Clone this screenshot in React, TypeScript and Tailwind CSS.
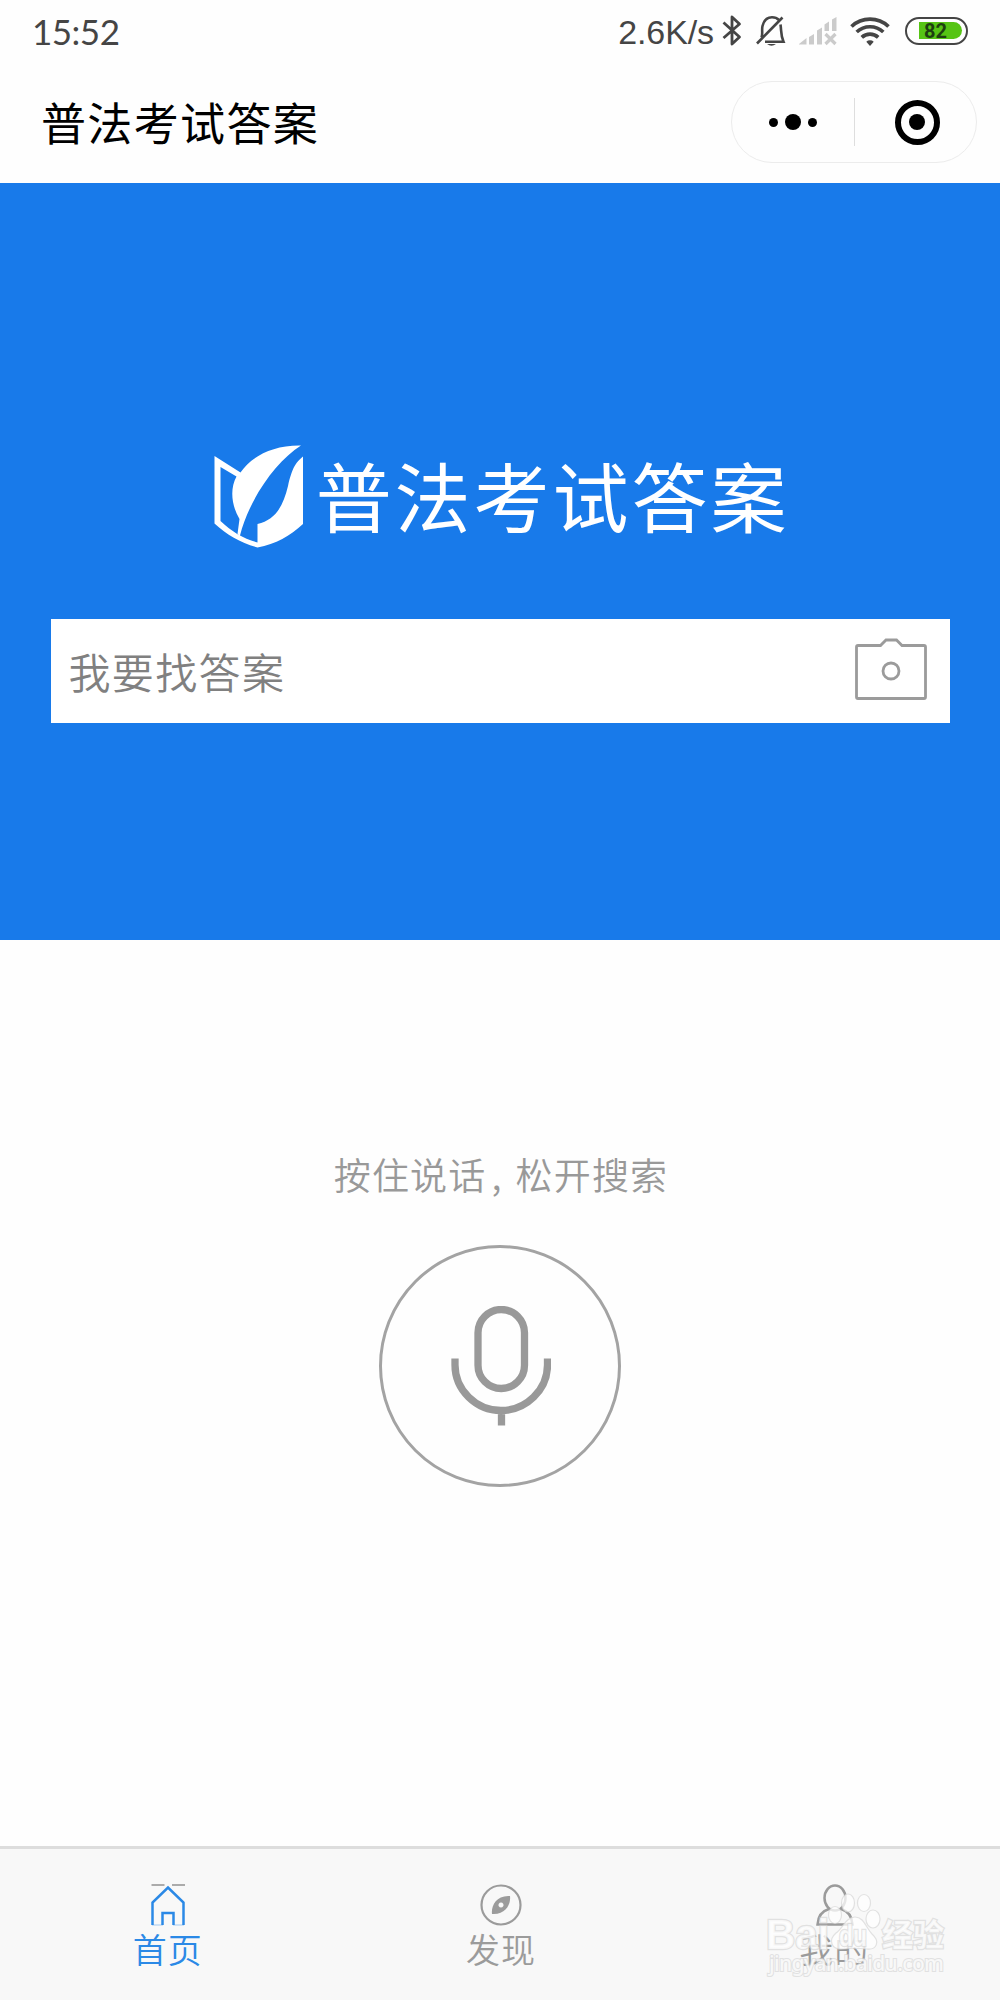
import type { ReactNode } from "react";

const StatusBar = () => (
  <div className="flex h-16 items-center justify-between pl-[32px] pr-[32px] text-[#454545]">
    <span className="mt-[-1px] font-[Lato,sans-serif] text-[35px] font-normal leading-none tracking-[-0.5px]">15:52</span>
    <div className="flex items-center">
      <span className="whitespace-nowrap font-['Liberation_Sans',sans-serif] text-[34px] font-normal leading-none tracking-[-0.1px]">2.6K/s</span>
      <svg className="ml-2 mt-[-2px] h-8 w-5" viewBox="0 0 20 32" fill="none" stroke="currentColor" strokeWidth="2.8">
        <path d="M1.5 7.5 L17.5 22 L10 29 V2 L17.5 9 L1.5 23" strokeLinejoin="round" />
      </svg>
      <svg className="ml-3.5 mt-[-3px] h-8 w-8" viewBox="0 0 32 32" fill="none" stroke="currentColor" strokeWidth="2.6">
        <path d="M1 28.5 L26.5 2.5 M5.5 22.5 C7 19 5.5 15 6.5 11 C8 5 12 2.3 16 2.3 C19 2.3 21 3 23 5 M24.5 9.5 C25.5 16 24.5 19.5 27.5 26.8 H9" />
        <path d="M11 29 h9 q-4.5 3.5 -9 0z" fill="currentColor" stroke="none" />
      </svg>
      <svg className="ml-[11px] mt-[-3px] h-8 w-[38px]" viewBox="0 0 38 32" fill="#cbcbcb">
        <path d="M0 29 L7.5 23 V29.5 H0z M10 22 L15 19 V29.5 H10z M18 15.5 L23 12.5 V29.5 H18z M25.5 9.5 L30 6.5 V16 H25.5z M33 4.5 L37.5 2 V16 H33z" />
        <path d="M26.5 19 L36.5 29 M36.5 19 L26.5 29" stroke="#cbcbcb" strokeWidth="3.2" />
      </svg>
      <svg className="ml-[13px] mt-[-2px] h-8 w-10" viewBox="0 0 40 32" fill="none" stroke="currentColor" strokeWidth="3.7">
        <path d="M1.5 11.5 A27 27 0 0 1 38.5 11.5 M6.7 17 A19.5 19.5 0 0 1 33.3 17 M11.8 22.3 A12 12 0 0 1 28.2 22.3" />
        <path d="M16.3 26.8 a5.5 5.5 0 0 1 7.4 0 L20 31z" fill="currentColor" stroke="none" />
      </svg>
      <div className="ml-[15px] mt-[-3px] flex h-[28px] w-[63px] items-center rounded-full border-2 border-[#454545] pl-3">
        <div className="flex h-[17px] w-[43px] items-center rounded-l-[2px] rounded-r-full bg-[#56c414] pl-[5px] font-[Roboto,sans-serif] text-[20px] font-bold leading-none text-[#1e3f10]">
          82
        </div>
      </div>
    </div>
  </div>
);

const NavBar = () => (
  <div className="flex h-[119px] items-start justify-between pl-[41px] pr-[23px]">
    <h1 className="mt-[23px] text-[45px] font-normal leading-[70px] tracking-[1.35px] text-black">普法考试答案</h1>
    <div className="mt-[17px] flex h-[82px] w-[246px] items-center rounded-full border border-[#ececec]">
      <div className="flex flex-1 items-center justify-center gap-[7px]">
        <i className="h-[9px] w-[9px] rounded-full bg-black" />
        <i className="h-4 w-4 rounded-full bg-black" />
        <i className="h-[9px] w-[9px] rounded-full bg-black" />
      </div>
      <div className="h-12 w-px bg-[#dedede]" />
      <div className="flex w-[121px] items-center justify-center pl-[3px]">
        <div className="flex h-[45px] w-[45px] items-center justify-center rounded-full border-[6px] border-black">
          <i className="h-4 w-4 rounded-full bg-black" />
        </div>
      </div>
    </div>
  </div>
);

const Logo = () => (
  <svg className="h-[104px] w-[90px]" viewBox="0 0 90 104" fill="white">
    <path d="M0.5 11 L26.5 27.5 C37 12 58 0 87 0.5 C61 17 35 55 26 90.5 L23.5 89 L25.5 74 C17 60 16 43 22.5 31.5 L6.5 22 V76 C18 87 30 94 43.5 97.5 V79 C61 75 69 62 74 41 C78 24 81 18 89 11.5 V79 C76 91 62 99 43.5 102.5 C27 98 13 90 0.5 78.5z" />
  </svg>
);

const Hero = () => (
  <section className="flex h-[757px] flex-col items-center bg-[#187aea]">
    <div className="mt-[262px] flex h-[104px] items-center gap-[12px] pl-[3px]">
      <Logo />
      <span className="mt-[-7px] text-[76px] font-normal leading-none tracking-[2.95px] text-white">普法考试答案</span>
    </div>
    <div className="mt-[70px] flex h-[104px] w-[899px] items-center justify-between bg-white pl-[18px] pr-[23px]">
      <span className="mt-[-1px] text-[42px] leading-none tracking-[1.35px] text-[#808080]">我要找答案</span>
      <svg className="mt-[-4px] h-[62px] w-[72px]" viewBox="0 0 72 62" fill="none" stroke="#9b9b9b" strokeWidth="2.8">
        <path d="M3 7.5 H25.5 L31 2 H41.5 L47 7.5 H69 Q70.5 7.5 70.5 9 V59 Q70.5 60.5 69 60.5 H3 Q1.5 60.5 1.5 59 V9 Q1.5 7.5 3 7.5z" />
        <circle cx="36" cy="33" r="8" />
      </svg>
    </div>
  </section>
);

const VoiceSearch = () => (
  <section className="flex flex-1 flex-col items-center text-[#999999]">
    <p className="mt-[204px] whitespace-nowrap pl-[2px] text-[37px] leading-[60px] tracking-[1.2px]">
      按住说话<span className="inline-block w-[29px] pl-[5px]">,</span>松开搜索
    </p>
    <button className="mt-[41px] flex h-[242px] w-[242px] items-center justify-center rounded-full border-3 border-[#a3a3a3]">
      <svg className="ml-[2px] h-[120px] w-[100px]" viewBox="0 0 100 120" fill="none" stroke="#999999" strokeWidth="7.3">
        <rect x="27" y="3.5" width="46.5" height="79" rx="23.25" />
        <path d="M4 52.5 V59 C4 84 25 104.5 50 104.5 C75 104.5 96.5 84 96.5 59 V52.5 M50.5 104 V119.5" />
      </svg>
    </button>
  </section>
);

const TabItem = ({ label, active, children }: { label: string; active?: boolean; children: ReactNode }) => (
  <div className={active ? "flex flex-1 flex-col items-center text-[#2b89e6]" : "flex flex-1 flex-col items-center text-[#9b9b9b]"}>
    <svg className="ml-[3px] mt-[35px] h-[42px] w-[42px]" viewBox="0 0 42 42" fill="none" stroke="currentColor" strokeWidth="2.5">
      {children}
    </svg>
    <span className="pl-[2px] text-[34px] leading-[46px] tracking-[1px]">{label}</span>
  </div>
);

const Watermark = () => (
  <svg
    className="absolute left-[764px] top-[1888px] h-[92px] w-[188px]"
    viewBox="0 0 188 92"
    fill="white"
    fillOpacity="0.75"
    stroke="#d4d4d4"
    strokeOpacity="0.65"
    strokeWidth="1.2"
  >
    <g fontFamily="Liberation Sans, sans-serif" fontWeight="bold">
      <ellipse cx="71" cy="27" rx="6.5" ry="8.5" />
      <ellipse cx="84" cy="15" rx="6.5" ry="9" />
      <ellipse cx="100" cy="15" rx="6.5" ry="8.5" />
      <ellipse cx="109" cy="31" rx="7" ry="9" />
      <path d="M72 45 C79 40 82 29 91 29 C100 29 102 40 108 46 C117 54 112 62 103 61 C94 60 86 60 79 61 C67 62 64 52 72 45z" />
      <g strokeWidth="2.5" paintOrder="stroke">
        <text x="2" y="61" fontSize="42" textLength="63" lengthAdjust="spacingAndGlyphs">Bai</text>
        <text x="75" y="58" fontSize="29" textLength="28" lengthAdjust="spacingAndGlyphs">du</text>
        <text x="118" y="58" fontSize="31" fontFamily="Noto Sans CJK SC, sans-serif" textLength="62">经验</text>
      </g>
    </g>
    <text
      x="5"
      y="83"
      fontSize="21"
      fontFamily="Noto Sans, sans-serif"
      fontWeight="500"
      textLength="175"
      strokeWidth="2"
      paintOrder="stroke"
    >
      jingyan.baidu.com
    </text>
  </svg>
);

const TabBar = () => (
  <nav className="flex h-[154px] border-t-[3px] border-[#dddddd] bg-[#f8f8f8]">
    <TabItem label="首页" active>
      <path d="M4.5 1 H17.5 M25 1 H38" stroke="#ababab" strokeWidth="1.8" />
      <path d="M5.5 41 V18.5 L21 3.5 L36.5 18.5 V41 M15.5 41 V29 H26.5 V41" />
      <path d="M5 41 H16 M26 41 H37" strokeOpacity="0.4" strokeWidth="1" />
    </TabItem>
    <TabItem label="发现">
      <circle cx="21" cy="21" r="19.5" strokeWidth="2.2" />
      <path
        d="M30 12 C31 20 26 31 12 30 C11 22 16 11 30 12z M21 18.5 a2.5 2.5 0 1 0 0.01 0z"
        fill="currentColor"
        fillRule="evenodd"
        stroke="none"
      />
    </TabItem>
    <TabItem label="我的">
      <ellipse cx="21" cy="14" rx="10.5" ry="12.5" />
      <path d="M15 25 C8 27 4 33 3.5 40.5 H38.5 C38 33 34 27 27 25" />
    </TabItem>
  </nav>
);

const App = () => {
  return (
    <main className="relative flex h-[2000px] w-[1000px] flex-col overflow-hidden bg-[#fefefe] font-['Noto_Sans_CJK_SC',sans-serif] font-[350]">
      <StatusBar />
      <NavBar />
      <Hero />
      <VoiceSearch />
      <TabBar />
      <Watermark />
    </main>
  );
};

export default App;
